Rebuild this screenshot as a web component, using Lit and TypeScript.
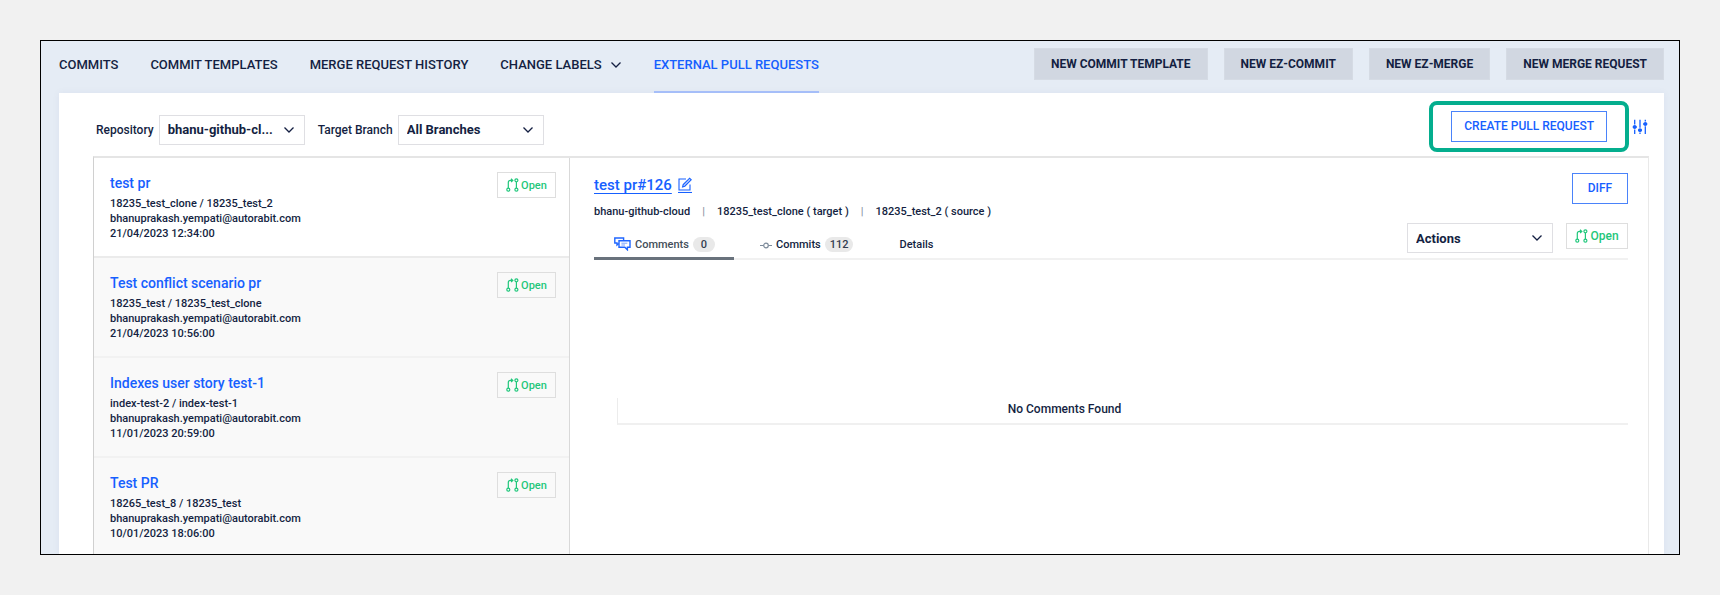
import { LitElement, html, css, svg } from 'lit';
import { customElement, property } from 'lit/decorators.js';
import { classMap } from 'lit/directives/class-map.js';

interface PullRequest {
  title: string;
  branches: string;
  author: string;
  date: string;
}

const pullRequests: PullRequest[] = [
  { title: 'test pr', branches: '18235_test_clone / 18235_test_2', author: 'bhanuprakash.yempati@autorabit.com', date: '21/04/2023 12:34:00' },
  { title: 'Test conflict scenario pr', branches: '18235_test / 18235_test_clone', author: 'bhanuprakash.yempati@autorabit.com', date: '21/04/2023 10:56:00' },
  { title: 'Indexes user story test-1', branches: 'index-test-2 / index-test-1', author: 'bhanuprakash.yempati@autorabit.com', date: '11/01/2023 20:59:00' },
  { title: 'Test PR', branches: '18265_test_8 / 18235_test', author: 'bhanuprakash.yempati@autorabit.com', date: '10/01/2023 18:06:00' },
];

const chevron = svg`<path d="M1.5 1.5 6 6 10.5 1.5" fill="none" stroke="currentColor" stroke-width="1.3"/>`;

@customElement('status-badge')
export class StatusBadge extends LitElement {
  @property() label = 'Open';
  @property({ type: Boolean, reflect: true }) large = false;

  static styles = css`
    :host {
      display: inline-flex;
      flex: none;
      align-items: center;
      justify-content: center;
      gap: 2px;
      box-sizing: border-box;
      width: 59px;
      height: 26px;
      border: 1px solid #dedede;
      color: #1fc77b;
      font-size: 11px;
      font-weight: 500;
    }
    :host([large]) {
      width: 62px;
      font-size: 12px;
      background: #fff;
    }
    .icon { width: 13px; height: 14px; }
  `;

  render() {
    return html`
      <svg class="icon" viewBox="0 0 13 14" fill="none" stroke="currentColor" stroke-width="1.2" aria-hidden="true">
        <circle cx="2.3" cy="11.7" r="1.5" />
        <path d="M2.3 10.2V4.4Q2.3 2.4 4.6 2.4H6.4M5 .8 6.8 2.4 5 4" />
        <circle cx="10.4" cy="2.3" r="1.5" />
        <circle cx="10.4" cy="11.7" r="1.5" />
        <path d="M10.4 3.8V10.2" />
      </svg>
      <span>${this.label}</span>
    `;
  }
}

@customElement('app-root')
export class AppRoot extends LitElement {
  static styles = css`
    :host {
      display: flex;
      flex-direction: column;
      box-sizing: border-box;
      min-height: 100vh;
      padding: 40px;
      background: #f1f1f1;
      color: #141f42;
      font-family: Roboto, "Liberation Sans", sans-serif;
      font-size: 12px;
    }
    * { box-sizing: border-box; }
    button, select { font: inherit; color: inherit; border-radius: 0; margin: 0; }
    a { color: inherit; text-decoration: none; }

    .frame {
      flex: 1;
      display: flex;
      flex-direction: column;
      border: 1px solid #000;
      background: #e5ecf5;
      padding: 0 15px 0 18px;
      overflow: hidden;
    }

    .topbar { display: flex; justify-content: space-between; height: 52px; }
    .nav { display: flex; gap: 32px; font-size: 13px; font-weight: 500; white-space: nowrap; }
    .nav-item {
      display: flex;
      align-items: center;
      gap: 8px;
      padding-bottom: 3px;
      border-bottom: 2px solid transparent;
    }
    .nav-item.active { color: #1660ff; border-bottom-color: #a9c2fb; }
    .chevron { width: 12px; height: 8px; }
    .actions { display: flex; gap: 16px; padding-top: 7px; }
    .action {
      height: 32px;
      padding: 0 16px;
      border: 1px solid #d5dbe4;
      background: #d1d7e1;
      font-size: 12px;
      font-weight: 700;
      white-space: nowrap;
    }

    .panel {
      flex: 1;
      display: flex;
      flex-direction: column;
      padding: 0 15px 0 34px;
      background: #fff;
      box-shadow: 0 0 8px rgba(20, 40, 110, 0.05);
    }

    .toolbar {
      display: flex;
      align-items: center;
      justify-content: space-between;
      padding: 8px 1px 4px 3px;
    }
    .filters { display: flex; align-items: center; padding-top: 6px; font-weight: 500; }
    .filter-label { padding-right: 5px; }
    .picker + .filter-label { padding-left: 13px; }
    .picker { display: grid; align-items: center; width: 146px; }
    .select {
      grid-area: 1 / 1;
      width: 100%;
      height: 30px;
      padding: 0 28px 0 8px;
      border: 1px solid #dfdfe3;
      background: #fff;
      appearance: none;
      font-size: 13px;
      font-weight: 700;
    }
    .picker .chevron {
      grid-area: 1 / 1;
      justify-self: end;
      margin-right: 10px;
      pointer-events: none;
    }
    .tools { display: flex; align-items: center; gap: 3px; color: #1660ff; }
    .highlight {
      padding: 6px 18px;
      border: 4px solid #04ae8e;
      border-radius: 8px;
    }
    .outline {
      display: block;
      min-width: 56px;
      height: 31px;
      padding: 0 12px;
      border: 1px solid #4a83fa;
      background: #fff;
      color: #1660ff;
      font-weight: 500;
      line-height: 27px;
      white-space: nowrap;
    }
    .icon-button { display: flex; padding: 0; border: 0; background: none; }
    .sliders { width: 16px; height: 16px; }

    .split {
      flex: 1;
      display: grid;
      grid-template-columns: 476px 1fr;
      border: 1px solid #d0d0d0;
      border-top: 2px solid #e5e5e5;
      border-right-color: #e9e9e9;
      border-bottom: 0;
    }
    .list { margin: 0; padding: 0; list-style: none; border-right: 1px solid #d9d9d9; background: #f9f9f9; }
    .card {
      display: flex;
      justify-content: space-between;
      align-items: flex-start;
      padding: 14px 13px 15px 16px;
      border-bottom: 2px solid #f2f2f2;
      font-size: 11px;
      font-weight: 500;
      line-height: 15px;
    }
    .card.selected { background: #fff; border-bottom-color: #ebebeb; }
    .card:last-child { padding-bottom: 8px; border-bottom: 0; }
    .card p { margin: 0; }
    .card-title { margin: 0 0 1px; color: #1660ff; font-size: 14px; font-weight: 500; line-height: 23px; }

    .detail { padding: 15px 20px 0 24px; min-width: 0; }
    .detail-head { display: flex; justify-content: space-between; align-items: flex-start; }
    .detail-title {
      display: flex;
      align-items: center;
      gap: 6px;
      margin: 0;
      color: #1660ff;
      font-size: 15px;
      font-weight: 500;
      line-height: 24px;
    }
    .detail-title a { text-decoration: underline; text-underline-offset: 3px; }
    .edit { width: 14px; height: 16px; }
    .meta { display: flex; gap: 12px; margin: 7px 0 0; font-size: 11px; font-weight: 500; line-height: 16px; white-space: pre; }
    .meta .bar { color: #8d93a3; }

    .tabbar {
      display: flex;
      justify-content: space-between;
      align-items: flex-start;
      height: 40px;
      padding-top: 3px;
      border-bottom: 2px solid #f1f1f1;
    }
    .tabs { display: flex; }
    .tab {
      display: flex;
      align-items: center;
      gap: 4px;
      height: 37px;
      padding: 8px 20px 0 26px;
      border: 0;
      border-bottom: 3px solid transparent;
      background: none;
      font-size: 11px;
      font-weight: 500;
    }
    .tab.active { width: 140px; padding: 8px 0 0 20px; border-bottom-color: #69727c; color: #444e59; }
    .pill {
      min-width: 22px;
      padding: 0 5px;
      border-radius: 8px;
      background: #e9e9e9;
      color: #333d50;
      line-height: 15px;
      text-align: center;
    }
    .chat { width: 17px; height: 14px; }
    .commit { width: 12px; height: 12px; }
    .tab-actions { display: flex; gap: 13px; align-items: flex-start; }

    .empty {
      height: 27px;
      margin: 138px 0 0 23px;
      padding-right: 117px;
      border-left: 1px solid #ececec;
      border-bottom: 2px solid #f0f0f0;
      font-weight: 500;
      line-height: 23px;
      text-align: center;
    }
  `;

  private picker(id: string, text: string, label?: string) {
    return html`
      <div class="picker">
        ${label
          ? html`<select class="select" id=${id} aria-label=${label}><option>${text}</option></select>`
          : html`<select class="select" id=${id}><option>${text}</option></select>`}
        <svg class="chevron" viewBox="0 0 12 8" aria-hidden="true">${chevron}</svg>
      </div>
    `;
  }

  render() {
    return html`
      <div class="frame">
        <header class="topbar">
          <nav class="nav">
            <a class="nav-item" href="#">COMMITS</a>
            <a class="nav-item" href="#">COMMIT TEMPLATES</a>
            <a class="nav-item" href="#">MERGE REQUEST HISTORY</a>
            <a class="nav-item" href="#">CHANGE LABELS
              <svg class="chevron" viewBox="0 0 12 8" aria-hidden="true">${chevron}</svg></a>
            <a class="nav-item active" href="#" aria-current="page">EXTERNAL PULL REQUESTS</a>
          </nav>
          <div class="actions">
            ${['NEW COMMIT TEMPLATE', 'NEW EZ-COMMIT', 'NEW EZ-MERGE', 'NEW MERGE REQUEST'].map(
              (label) => html`<button class="action">${label}</button>`,
            )}
          </div>
        </header>

        <main class="panel">
          <div class="toolbar">
            <div class="filters">
              <label class="filter-label" for="repository">Repository</label>
              ${this.picker('repository', 'bhanu-github-cl...')}
              <label class="filter-label" for="branch">Target Branch</label>
              ${this.picker('branch', 'All Branches')}
            </div>
            <div class="tools">
              <div class="highlight"><button class="outline">CREATE PULL REQUEST</button></div>
              <button class="icon-button" aria-label="Filter settings">
                <svg class="sliders" viewBox="0 0 16 16" fill="none" stroke="#1660ff" stroke-width="1.3">
                  <path d="M2.7 .8V5.4M2.7 10.4V15M8 .8V8.8M8 13.4V15M13.3 .8V2.6M13.3 7.2V15" />
                  <path d="M.8 8H4.6M6.1 11.2H9.9M11.4 5H15.2" stroke-width="1.8" />
                  <g fill="#1660ff" stroke="none">
                    <circle cx="2.7" cy="8" r="1.9" /><circle cx="8" cy="11.2" r="1.9" /><circle cx="13.3" cy="5" r="1.9" />
                  </g>
                </svg>
              </button>
            </div>
          </div>

          <div class="split">
            <ul class="list">
              ${pullRequests.map(
                (pr, i) => html`
                  <li class=${classMap({ card: true, selected: i === 0 })}>
                    <div>
                      <h3 class="card-title"><a href="#">${pr.title}</a></h3>
                      <p>${pr.branches}</p>
                      <p>${pr.author}</p>
                      <p>${pr.date}</p>
                    </div>
                    <status-badge></status-badge>
                  </li>
                `,
              )}
            </ul>

            <section class="detail">
              <div class="detail-head">
                <div>
                  <h2 class="detail-title">
                    <a href="#">test pr#126</a>
                    <svg class="edit" viewBox="0 0 14 16" fill="none" stroke="currentColor" stroke-width="1.1" aria-hidden="true">
                      <path d="M8 2H1V13H12V7.5" />
                      <path d="M0 15.5H14" />
                      <path d="M4.6 9.9 5.2 7.6 11.6 1.2 13.2 2.8 6.8 9.2Z" fill="#bcd0ff" />
                    </svg>
                  </h2>
                  <p class="meta"><span>bhanu-github-cloud</span><span class="bar">|</span><span>18235_test_clone ( target )</span><span class="bar">|</span><span>18235_test_2 ( source )</span></p>
                </div>
                <button class="outline">DIFF</button>
              </div>

              <div class="tabbar">
                <div class="tabs" role="tablist">
                  <button class="tab active" role="tab" aria-selected="true">
                    <svg class="chat" viewBox="0 0 17 14" fill="none" stroke="#1f66ff" stroke-width="1.4" aria-hidden="true">
                      <path d="M4.8 6.4 3 8V6H.8V1H9.6V3.2" />
                      <path d="M5 3.8H16V10.2H13.4V12.8L10.8 10.2H5Z" />
                      <path d="M7.4 6.2H13.4M7.4 8H11" stroke-width=".6" />
                    </svg>
                    Comments <span class="pill">0</span>
                  </button>
                  <button class="tab" role="tab" aria-selected="false">
                    <svg class="commit" viewBox="0 0 12 12" fill="none" stroke="#7d8b9b" stroke-width="1.2" aria-hidden="true">
                      <path d="M0 7.5H3.6M8.4 7.5H12" />
                      <circle cx="6" cy="7.5" r="2.3" />
                    </svg>
                    Commits <span class="pill">112</span>
                  </button>
                  <button class="tab" role="tab" aria-selected="false">Details</button>
                </div>
                <div class="tab-actions">
                  ${this.picker('actions', 'Actions', 'Pull request actions')}
                  <status-badge large></status-badge>
                </div>
              </div>

              <p class="empty">No Comments Found</p>
            </section>
          </div>
        </main>
      </div>
    `;
  }
}
